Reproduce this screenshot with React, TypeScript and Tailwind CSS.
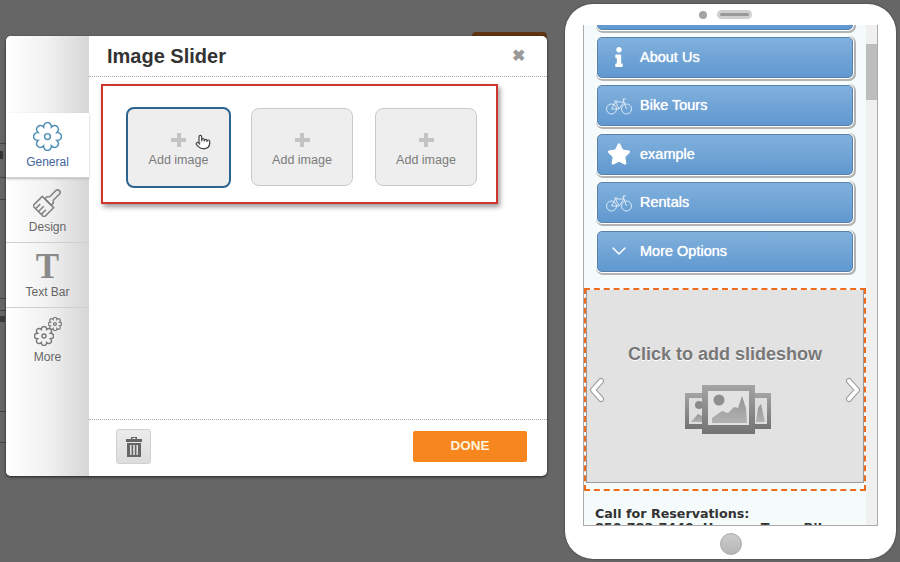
import type { ReactNode } from "react";
import { ChevronDown, Pointer } from "lucide-react";
import { FaInfo, FaStar } from "react-icons/fa";

// scalloped outline for the settings gears
const gearPath = (c: number, valley: number, peak: number, teeth = 8) => {
  const step = (Math.PI * 2) / teeth;
  const pt = (r: number, a: number) => `${(c + r * Math.cos(a)).toFixed(2)} ${(c + r * Math.sin(a)).toFixed(2)}`;
  let d = `M${pt(valley, -step / 2)}`;
  for (let i = 0; i < teeth; i++) {
    const a = i * step;
    d += ` C${pt(peak, a - step * 0.32)} ${pt(peak, a + step * 0.32)} ${pt(valley, a + step / 2)}`;
  }
  return `${d}Z`;
};

const Gear = ({ size, color, width }: { size: number; color: string; width: number }) => (
  <svg width={size} height={size} viewBox="0 0 30 30" fill="none" stroke={color} strokeWidth={width}>
    <path d={gearPath(15, 10.5, 16.5)} />
    <circle cx="15" cy="15" r="3" />
  </svg>
);

const BrushIcon = () => (
  <svg width="30" height="30" viewBox="0 0 30 30" fill="none" stroke="#858585" strokeWidth="1.6" strokeLinejoin="round">
    <g transform="rotate(45 15 15)">
      <path d="M12.500 1.500a2.500 2.500 0 0 1 5 0V10l2 2v3h-9v-3l2-2z" />
      <path d="M7 15h16v13.500H7z" />
      <path d="M11 22v6.500M15 21v7.500M19 22v6.500" />
    </g>
  </svg>
);

const BikeIcon = () => (
  <svg width="26" height="18" viewBox="0 0 26 18" fill="none" stroke="#e4eff9" strokeWidth="0.9">
    <circle cx="5.500" cy="12" r="5" />
    <circle cx="20.500" cy="12" r="5" />
    <path d="M5.500 12L9.500 5H18L20.500 12M9.500 5L13 12L18 5M13 12H5.500M8 4H11.500M18 5L17 2H20" />
  </svg>
);

const SideTab = ({ label, icon, active, last }: { label: string; icon: ReactNode; active?: boolean; last?: boolean }) => (
  <div
    className={`flex h-[65px] flex-col items-center pt-[7px] ${last ? "" : "border-b border-[#cfcfcf]"} ${
      active ? "bg-white text-[#44659c] shadow-[0_1px_2px_#bbb]" : "text-[#666]"
    }`}
  >
    <div className="flex h-[33px] items-center justify-center">{icon}</div>
    <span className="mt-[2px] text-[12px] leading-[14px]">{label}</span>
  </div>
);

const AddImage = ({ active }: { active?: boolean }) => (
  <div
    className={`relative flex flex-col items-center rounded-[8px] bg-[#eeeeee] pt-[24px] ${
      active ? "h-[81px] w-[105px] border-2 border-[#2b648f]" : "h-[78px] w-[102px] border border-[#c9c9c9]"
    }`}
  >
    <div className="relative h-[14px] w-[15px]">
      <div className="absolute left-0 top-[5px] h-[4px] w-[15px] bg-[#c4c4c4]" />
      <div className="absolute left-[5.5px] top-0 h-[14px] w-[4px] bg-[#c4c4c4]" />
    </div>
    <span className="mt-[6px] text-[12.5px] leading-[15px] text-[#7b7b7b]">Add image</span>
    {active && (
      <Pointer className="absolute left-[67px] top-[25px] fill-white text-[#444]" size={16} strokeWidth={1.8} />
    )}
  </div>
);

const MenuButton = ({ label, icon, className = "" }: { label: string; icon: ReactNode; className?: string }) => (
  <div
    className={`flex h-[41px] shrink-0 items-center rounded-[5px] border border-[#5781ad] bg-gradient-to-b from-[#81b1dd] to-[#6098cf] shadow-[0_0_0_1px_#fff,1px_1px_0_2px_#b4b4b4] ${className}`}
  >
    <div className="flex w-[42px] shrink-0 justify-center text-white">{icon}</div>
    <span className="text-[14.5px] leading-none text-white [text-shadow:0_0_1px_#fff]">{label}</span>
  </div>
);

const SlideIcon = () => (
  <svg width="88" height="50" viewBox="0 0 88 50">
    <defs>
      <linearGradient id="frame" x1="0" y1="0" x2="0" y2="1">
        <stop offset="0" stopColor="#a4a4a4" />
        <stop offset="1" stopColor="#737373" />
      </linearGradient>
      <linearGradient id="hill" x1="0" y1="0" x2="0" y2="1">
        <stop offset="0" stopColor="#949494" />
        <stop offset="1" stopColor="#b2b2b2" />
      </linearGradient>
    </defs>
    <rect x="1" y="9" width="86" height="36" fill="url(#frame)" />
    <rect x="5" y="14" width="78" height="26" fill="#dedede" />
    <circle cx="15" cy="21" r="4" fill="#8a8a8a" />
    <path d="M7 38 L14 30 L22 34 L25 38Z" fill="url(#hill)" />
    <path d="M72 38 L74 24 L77 20 L81 38Z" fill="url(#hill)" />
    <rect x="18" y="1" width="53" height="49" fill="url(#frame)" />
    <rect x="24" y="7" width="41" height="34" fill="#e2e2e2" />
    <circle cx="35" cy="16" r="5.5" fill="#8f8f8f" />
    <path d="M28 39 L28 34 L38 27 L44 29 L50 23 L54 24 L58 12 L62 24 L63 39Z" fill="url(#hill)" />
  </svg>
);

const SlideArrow = ({ d }: { d: string }) => (
  <svg width="18" height="26" viewBox="0 0 18 26">
    <path d={d} fill="none" stroke="#9c9c9c" strokeWidth="6" strokeLinecap="round" strokeLinejoin="round" />
    <path d={d} fill="none" stroke="#ffffff" strokeWidth="4" strokeLinecap="round" strokeLinejoin="round" />
  </svg>
);

export default function App() {
  return (
    <div className="relative flex h-[562px] w-[900px] items-start overflow-hidden bg-[#666666] font-['Liberation_Sans',Arial,sans-serif]">
      {/* page left behind the overlay */}
      <div className="absolute left-[472px] top-[32px] h-[6px] w-[75px] rounded-t-[4px] bg-[#5f3410]" />
      <div className="absolute left-0 top-[143px] h-px w-[6px] bg-[#444]" />
      <div className="absolute left-0 top-[151px] h-[8px] w-[3px] bg-[#333]" />
      <div className="absolute left-0 top-[177px] h-px w-[6px] bg-[#444]" />
      <div className="absolute left-0 top-[199px] h-px w-[6px] bg-[#444]" />
      <div className="absolute left-0 top-[298px] h-px w-[6px] bg-[#444]" />
      <div className="absolute left-0 top-[310px] h-px w-[6px] bg-[#444]" />
      <div className="absolute left-0 top-[316px] h-[6px] w-[5px] bg-[#3c3c3c]" />
      <div className="absolute left-0 top-[411px] h-px w-[6px] bg-[#444]" />
      <div className="absolute left-0 top-[442px] h-px w-[6px] bg-[#444]" />

      <div className="relative ml-[6px] mt-[36px] flex h-[440px] w-[541px] overflow-hidden rounded-[5px] bg-white shadow-[0_1px_3px_#222]">
        <div className="flex w-[83px] shrink-0 flex-col bg-gradient-to-r from-white via-[#f1f1f1] to-[#d6d6d6] pt-[77px]">
          <SideTab label="General" active icon={<Gear size={29} color="#4a8db5" width={1.5} />} />
          <SideTab label="Design" icon={<BrushIcon />} />
          <SideTab
            label="Text Bar"
            icon={<span className="font-['Liberation_Serif',serif] text-[35px] font-bold leading-none text-[#8a8a8a]">T</span>}
          />
          <SideTab
            label="More"
            last
            icon={
              <div className="relative h-[29px] w-[28px]">
                <div className="absolute right-0 top-0">
                  <Gear size={14} color="#7a7a7a" width={2.6} />
                </div>
                <div className="absolute bottom-0 left-0">
                  <Gear size={20} color="#7a7a7a" width={2.2} />
                </div>
              </div>
            }
          />
        </div>

        <div className="flex min-w-0 flex-1 flex-col">
          <div className="flex h-[41px] shrink-0 items-center justify-between border-b border-dotted border-[#aaaaaa] pl-[18px] pr-[22px]">
            <h1 className="text-[20px] font-bold leading-none text-[#333333]">Image Slider</h1>
            <span className="text-[16px] font-bold leading-none text-[#9a9a9a]">✖</span>
          </div>

          <div className="flex-1 px-[12px] pt-[7px]">
            <div className="flex h-[120px] w-[397px] items-start gap-[20px] border-2 border-[#d0352a] pl-[23px] pt-[21px] shadow-[2px_3px_5px_#999]">
              <AddImage active />
              <div className="flex gap-[22px] pt-px">
                <AddImage />
                <AddImage />
              </div>
            </div>
          </div>

          <div className="flex h-[57px] shrink-0 items-start justify-between border-t border-dotted border-[#aaaaaa] pl-[27px] pr-[20px] pt-[9px]">
            <div className="flex h-[35px] w-[35px] items-center justify-center rounded-[3px] border border-[#d0d0d0] bg-gradient-to-b from-[#ececec] to-[#dcdcdc]">
              <svg width="16" height="20" viewBox="0 0 16 20" fill="#666666">
                <path d="M5 0h6v2h5v3H0V2h5zM6.500 1v1h3V1z" />
                <path d="M1 6h14v14H1zM4 8v10h1.500V8zM7.200 8v10h1.600V8zM10.500 8v10H12V8z" fillRule="evenodd" />
              </svg>
            </div>
            <button className="mt-[2px] flex h-[31px] w-[114px] items-center justify-center rounded-[2px] bg-[#f7861e] text-[13.5px] font-bold text-[#fff3dc]">
              DONE
            </button>
          </div>
        </div>
      </div>

      <div className="ml-[18px] mt-[4px] flex h-[555px] w-[331px] flex-col items-center rounded-[28px] bg-white shadow-[0_0_2px_#333]">
        <div className="flex h-[21px] w-full shrink-0 items-center justify-center gap-[10px] pr-[10px]">
          <div className="h-[8px] w-[8px] rounded-full bg-[#a3a3a3]" />
          <div className="flex h-[9px] w-[35px] items-center rounded-full bg-[#d0d0d0] px-[3px]">
            <div className="h-[3px] w-full rounded-full bg-[#999999]" />
          </div>
        </div>

        <div className="flex h-[501px] w-[295px] shrink-0 overflow-hidden border border-t-0 border-[#aaaaaa]">
          <div className="flex min-w-0 flex-1 flex-col bg-[#f5fbfb]">
            <div className="flex flex-col gap-[7.500px] px-[13px]">
              <MenuButton label="" icon={null} className="-mb-[1px] -mt-[36px]" />
              <MenuButton label="About Us" icon={<FaInfo size={20} />} />
              <MenuButton label="Bike Tours" icon={<BikeIcon />} />
              <MenuButton label="example" icon={<FaStar size={24} />} />
              <MenuButton label="Rentals" icon={<BikeIcon />} />
              <MenuButton label="More Options" icon={<ChevronDown size={24} strokeWidth={1.5} />} />
            </div>

            <div className="mt-[16px] h-[203px] shrink-0 border-2 border-dashed border-[#ef6c1c]">
              <div className="relative flex h-[193px] flex-col items-center border-x border-b border-[#999999] bg-[#e2e2e2] pt-[54px]">
                <span className="text-[18px] font-bold leading-[20px] text-[#777777] [text-shadow:0_1px_0_#fff]">
                  Click to add slideshow
                </span>
                <div className="ml-[6px] mt-[20px]">
                  <SlideIcon />
                </div>
                <div className="absolute left-[1px] top-[87px]">
                  <SlideArrow d="M13 4 L5 13 L13 22" />
                </div>
                <div className="absolute right-[1px] top-[87px]">
                  <SlideArrow d="M5 4 L13 13 L5 22" />
                </div>
              </div>
            </div>

            <div className="mt-[16px] whitespace-pre pl-[11px] font-['DejaVu_Sans',sans-serif] text-[12.7px] font-bold leading-[14px] text-[#333333]">
              <p>Call for Reservations:</p>
              <p>850-783-7440  Havana Tours Bike</p>
            </div>
          </div>
          <div className="w-[11px] shrink-0 bg-[#f0f0f0] pt-[19px]">
            <div className="h-[56px] bg-[#bdbdbd]" />
          </div>
        </div>

        <div className="mt-[7px] h-[22px] w-[22px] rounded-full border border-[#aaaaaa] bg-gradient-to-b from-[#cccccc] to-[#b5b5b5]" />
      </div>
    </div>
  );
}
